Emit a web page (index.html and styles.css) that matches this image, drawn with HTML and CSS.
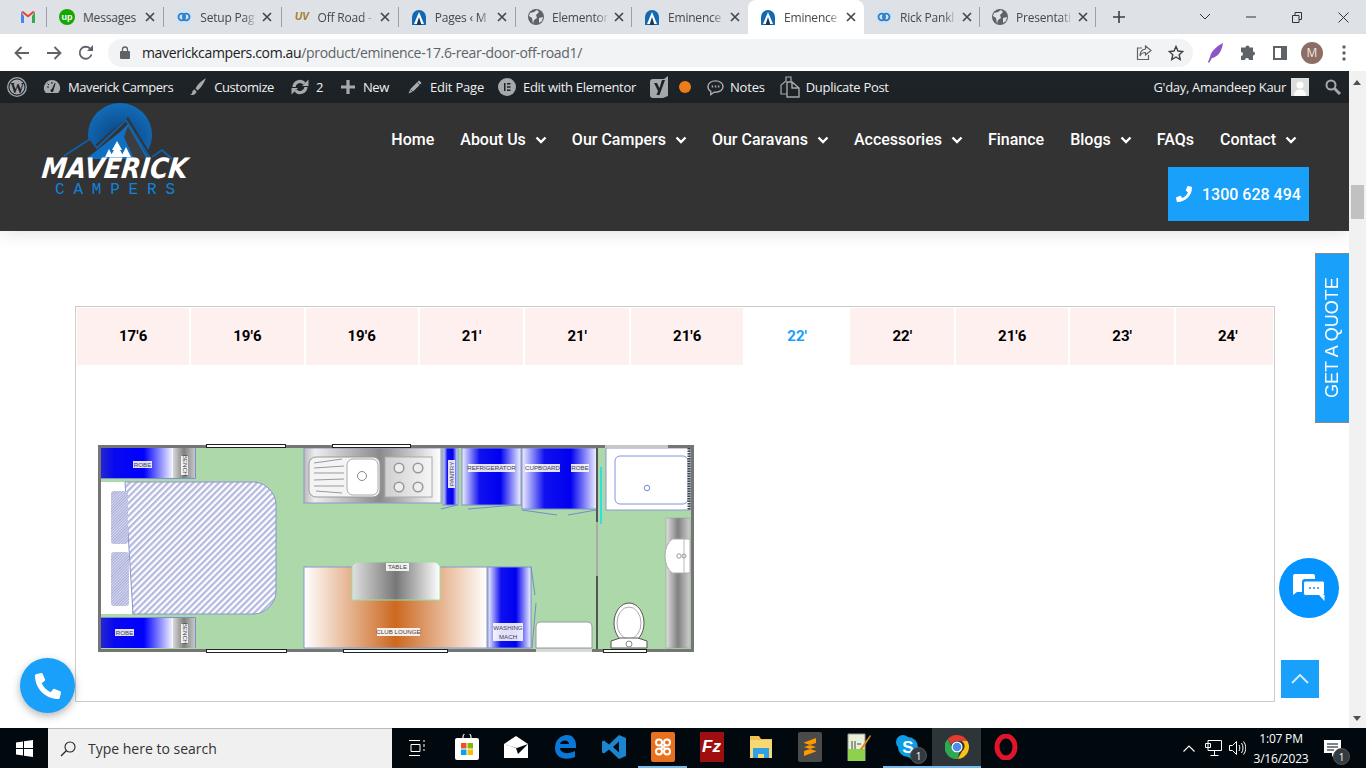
FILE: index.html
```html
<!DOCTYPE html>
<html>
<head>
  <title>Eminence 17'6 Rear Door Off Road</title>
  <link rel="stylesheet" href="styles.css">
</head>
<body>
  <svg class="defs" width="0" height="0">
    <symbol id="mav" viewBox="0 0 16 16">
      <path d="M1 16V8a7 7 0 0 1 14 0v8z" fill="#1168b3"/>
      <path d="M8 3 13 15H3z" fill="#fff"/>
      <path d="M8 8 10.500 16H5.500z" fill="#14395e"/>
    </symbol>
    <symbol id="globe" viewBox="0 0 16 16">
      <circle cx="8" cy="8" r="8" fill="#5f6368"/>
      <path d="M2 4 6 3 9 1 11 3 8 6 9 9 6 11 5 15 4 9 1 7ZM11 9 15 8 14 12 11 14Z" fill="#dee1e6"/>
    </symbol>
    <symbol id="ring" viewBox="0 0 16 16">
      <circle cx="8" cy="8" r="8" fill="#cfe3f5"/>
      <circle cx="5.800" cy="8" r="3.300" fill="none" stroke="#2d7fc6" stroke-width="1.800"/>
      <circle cx="10.200" cy="8" r="3.300" fill="none" stroke="#2d7fc6" stroke-width="1.800"/>
    </symbol>
    <symbol id="close" viewBox="0 0 10 10">
      <path d="M1 1 9 9M9 1 1 9" stroke="#45484c" stroke-width="1.7" fill="none"/>
    </symbol>
    <symbol id="chev" viewBox="0 0 12 8">
      <path d="M1.500 1.500 6 6l4.500-4.500" stroke="#fff" stroke-width="2.400" fill="none"/>
    </symbol>
    <symbol id="phone" viewBox="0 0 512 512">
      <path d="M493.400 24.600l-104-24c-11.300-2.600-22.900 3.300-27.500 13.900l-48 112c-4.200 9.800-1.400 21.300 6.900 28l60.600 49.600c-36 76.700-98.900 140.500-177.200 177.200l-49.600-60.600c-6.800-8.300-18.200-11.100-28-6.900l-112 48C3.900 366.500-2 378.100.6 389.400l24 104C27.100 504.200 36.700 512 48 512c256.100 0 464-207.500 464-464 0-11.200-7.700-20.900-18.600-23.400z" fill="#fff"/>
    </symbol>
  </svg>

  <!-- browser tabs -->
  <div class="tabstrip">
    <div class="tab tab-pinned">
      <svg width="16" height="16" viewBox="0 0 16 16"><path d="M1 3v11h3V7z" fill="#4285f4"/><path d="M15 3v11h-3V7z" fill="#34a853"/><path d="M1 3 8 8.500 15 3 13 2 8 6 3 2Z" fill="#ea4335"/></svg>
    </div>
    <div class="tab">
      <svg width="16" height="16" viewBox="0 0 16 16"><circle cx="8" cy="8" r="8" fill="#14a800"/><text x="8" y="11" class="fav-up">up</text></svg>
      <span class="tab-title">Messages</span>
      <svg class="tab-x" width="10" height="10"><use href="#close"/></svg>
    </div>
    <div class="tab">
      <svg width="16" height="16"><use href="#ring"/></svg>
      <span class="tab-title">Setup Pag</span>
      <svg class="tab-x" width="10" height="10"><use href="#close"/></svg>
    </div>
    <div class="tab">
      <svg width="16" height="16" viewBox="0 0 16 16"><text x="8" y="11" class="fav-uv">UV</text></svg>
      <span class="tab-title">Off Road -</span>
      <svg class="tab-x" width="10" height="10"><use href="#close"/></svg>
    </div>
    <div class="tab">
      <svg width="16" height="16"><use href="#mav"/></svg>
      <span class="tab-title">Pages ‹ M</span>
      <svg class="tab-x" width="10" height="10"><use href="#close"/></svg>
    </div>
    <div class="tab">
      <svg width="16" height="16"><use href="#globe"/></svg>
      <span class="tab-title">Elementor</span>
      <svg class="tab-x" width="10" height="10"><use href="#close"/></svg>
    </div>
    <div class="tab tab-before-active">
      <svg width="16" height="16"><use href="#mav"/></svg>
      <span class="tab-title">Eminence</span>
      <svg class="tab-x" width="10" height="10"><use href="#close"/></svg>
    </div>
    <div class="tab tab-active">
      <svg width="16" height="16"><use href="#mav"/></svg>
      <span class="tab-title">Eminence</span>
      <svg class="tab-x" width="10" height="10"><use href="#close"/></svg>
    </div>
    <div class="tab">
      <svg width="16" height="16"><use href="#ring"/></svg>
      <span class="tab-title">Rick Pankl</span>
      <svg class="tab-x" width="10" height="10"><use href="#close"/></svg>
    </div>
    <div class="tab">
      <svg width="16" height="16"><use href="#globe"/></svg>
      <span class="tab-title">Presentati</span>
      <svg class="tab-x" width="10" height="10"><use href="#close"/></svg>
    </div>
    <svg class="new-tab" width="14" height="14" viewBox="0 0 14 14"><path d="M7 1v12M1 7h12" stroke="#3c4043" stroke-width="1.600"/></svg>
    <div class="win-controls">
      <span class="win-btn"><svg width="12" height="8" viewBox="0 0 12 8"><path d="M1 1l5 5 5-5" stroke="#333" fill="none"/></svg></span>
      <span class="win-btn"><svg width="10" height="2" viewBox="0 0 10 2"><path d="M0 1h10" stroke="#333"/></svg></span>
      <span class="win-btn"><svg width="10" height="11" viewBox="0 0 10 11"><path d="M.5 3.500h6.500v7H.5zM3 3.500V.5h6.500v7H7" stroke="#333" fill="none"/></svg></span>
      <span class="win-btn"><svg width="11" height="11" viewBox="0 0 11 11"><path d="M.5.5l10 10M10.500.5l-10 10" stroke="#333" fill="none"/></svg></span>
    </div>
  </div>

  <!-- address bar -->
  <div class="toolbar">
    <span class="tool-btn"><svg width="16" height="14" viewBox="0 0 16 14"><path d="M15 7H2M7.500 1 1.500 7l6 6" stroke="#5f6368" stroke-width="1.800" fill="none"/></svg></span>
    <span class="tool-btn"><svg width="16" height="14" viewBox="0 0 16 14"><path d="M1 7h13M8.500 1l6 6-6 6" stroke="#5f6368" stroke-width="1.800" fill="none"/></svg></span>
    <span class="tool-btn"><svg width="16" height="16" viewBox="0 0 16 16"><path d="M13.500 9.500A6 6 0 1 1 12 3.500" stroke="#5f6368" stroke-width="1.800" fill="none"/><path d="M9 6h6V0z" fill="#5f6368"/></svg></span>
    <div class="omnibox">
      <svg class="lock" width="10" height="13" viewBox="0 0 10 13"><path d="M2.500 6V3.500a2.500 2.500 0 0 1 5 0V6" stroke="#5f6368" stroke-width="1.300" fill="none"/><rect y="5" width="10" height="8" rx="1" fill="#5f6368"/></svg>
      <span class="url"><span class="url-host">maverickcampers.com.au</span>/product/eminence-17.6-rear-door-off-road1/</span>
      <svg class="omni-icon" width="16" height="16" viewBox="0 0 16 16"><path d="M6 3H1.500v11.500h11V10" stroke="#5f6368" stroke-width="1.200" fill="none"/><path d="M9.500 1l5.500 4.500L9.500 10V7.500C7 7.500 5 8.500 4 11c0-4 2-6.500 5.500-7z" stroke="#5f6368" stroke-width="1.200" fill="#f1f3f4"/></svg>
      <svg class="omni-icon" width="16" height="16" viewBox="0 0 16 16"><path d="M8 1.500l2 4.500 4.800.5-3.600 3.200 1 4.800L8 12l-4.200 2.500 1-4.800L1.200 6.500 6 6z" stroke="#3c4043" stroke-width="1.400" fill="none"/></svg>
    </div>
    <span class="tool-btn"><svg width="16" height="20" viewBox="0 0 16 20"><path d="M15 0C9 3 3 8 2 14L0 19l1 1 3-5C10 14 14 8 15 0z" fill="#8a55c9"/></svg></span>
    <span class="tool-btn"><svg width="16" height="16" viewBox="0 0 16 16"><path d="M5.500 2.500a2 2 0 0 1 4 0H13v4a2 2 0 0 1 0 4V15H9a2 2 0 0 0-4 0H1v-4a2 2 0 0 0 0-4V2.500z" fill="#5f6368"/></svg></span>
    <span class="tool-btn"><svg width="14" height="14" viewBox="0 0 14 14"><rect x="1" y="1" width="12" height="12" fill="none" stroke="#5f6368" stroke-width="2"/><rect x="8" y="1" width="5" height="12" fill="#5f6368"/></svg></span>
    <span class="tool-btn"><span class="profile">M</span></span>
    <span class="tool-btn"><svg width="4" height="16" viewBox="0 0 4 16"><circle cx="2" cy="2" r="1.700" fill="#5f6368"/><circle cx="2" cy="8" r="1.700" fill="#5f6368"/><circle cx="2" cy="14" r="1.700" fill="#5f6368"/></svg></span>
  </div>

  <div class="viewport">
    <div class="page">
      <!-- wp admin bar -->
      <div class="adminbar">
        <div class="ab-left">
          <span class="ab-item"><svg width="20" height="20" viewBox="0 0 20 20"><circle cx="10" cy="10" r="9.300" fill="none" stroke="#a7aaad" stroke-width="1.300"/><circle cx="10" cy="10" r="7.500" fill="#a7aaad"/><text x="10" y="15.500" class="ab-w">W</text></svg></span>
          <span class="ab-item"><svg width="18" height="18" viewBox="0 0 18 18"><path d="M9 2a8 8 0 0 0-7 12l1 1h12l1-1A8 8 0 0 0 9 2z" fill="#a7aaad"/><path d="M9 12 12 5.500 10 12z" stroke="#1d2327" fill="#1d2327"/><circle cx="9" cy="12.500" r="1.500" fill="#1d2327"/><path d="M4 9h2M9 4v2M4.500 5.500 6 7" stroke="#1d2327"/></svg>Maverick Campers</span>
          <span class="ab-item"><svg width="17" height="18" viewBox="0 0 17 18"><path d="M16 0C11 3 7 7 5.500 10.500l2 2C11 10 14 5 16 0z" fill="#a7aaad"/><path d="M4.500 11.500c-2 .5-2 2-2.500 3.500-.3 1-1 1.500-2 2 3 .5 6-.500 6.500-3.500z" fill="#a7aaad"/></svg>Customize</span>
          <span class="ab-item"><svg width="18" height="18" viewBox="0 0 18 18"><path d="M3 9A6 6 0 0 1 13.500 5.500" stroke="#a7aaad" stroke-width="3.200" fill="none"/><path d="M15 9A6 6 0 0 1 4.500 12.500" stroke="#a7aaad" stroke-width="3.200" fill="none"/><path d="M11 8h6.500V1.500zM7 10H.5v6.500z" fill="#a7aaad"/></svg>2</span>
          <span class="ab-item"><svg width="16" height="16" viewBox="0 0 16 16"><path d="M8 1v14M1 8h14" stroke="#a7aaad" stroke-width="3.200"/></svg>New</span>
          <span class="ab-item ab-editpage"><svg width="16" height="16" viewBox="0 0 16 16"><path d="M12 1l3 3L6 13l-5 2 2-5zM10.500 3.500l2.500 2.500M3.500 10.500 6 13" fill="#a7aaad" stroke="#1d2327" stroke-width=".7"/></svg>Edit Page</span>
          <span class="ab-item ab-pull ab-elementor"><svg width="18" height="18" viewBox="0 0 18 18"><circle cx="9" cy="9" r="9" fill="#a7aaad"/><path d="M6 5h1.500v8H6zM9 5h3.500v1.500H9zM9 8.300h3.500v1.500H9zM9 11.500h3.500V13H9z" fill="#1d2327"/></svg>Edit with Elementor</span>
          <span class="ab-item ab-pull"><svg width="18" height="22" viewBox="0 0 18 22"><path d="M3 3h11l4-3v20l-5 2H3a3 3 0 0 1-3-3V6a3 3 0 0 1 3-3z" fill="#a7aaad"/><path d="M4 7h3l2.500 5L12 4h3l-5.500 15H6.500l1.500-4z" fill="#1d2327"/></svg></span>
          <span class="ab-dot"></span>
          <span class="ab-item ab-tight ab-notes"><svg width="17" height="17" viewBox="0 0 18 17"><path d="M9 1.500c4.500 0 8 2.500 8 6s-3.500 6-8 6H7.500L4 16v-3.500C2 11.500 1 9.500 1 7.500c0-3.500 3.500-6 8-6z" fill="none" stroke="#a7aaad" stroke-width="1.500"/><path d="M5 7.500h1.600M8.300 7.500h1.600M11.500 7.500h1.600" stroke="#a7aaad" stroke-width="2"/></svg>Notes</span>
          <span class="ab-item ab-tight ab-dup"><svg width="20" height="22" viewBox="0 0 20 22"><path d="M6 5 1 9v9h6M6 5V1h5v5" fill="none" stroke="#a7aaad" stroke-width="1.200"/><path d="M12 6H7v15h12V12zM12 6v6h7" fill="none" stroke="#a7aaad" stroke-width="1.400"/></svg>Duplicate Post</span>
        </div>
        <div class="ab-right">
          <span class="howdy">G'day, Amandeep Kaur</span>
          <svg width="18" height="18" viewBox="0 0 18 18"><rect width="18" height="18" fill="#ddd"/><circle cx="9" cy="7" r="3.500" fill="#fff"/><path d="M3 18c0-5 3-6.500 6-6.500s6 1.500 6 6.500z" fill="#fff"/></svg>
          <svg class="ab-search" width="16" height="16" viewBox="0 0 16 16"><circle cx="6" cy="6" r="4.500" fill="none" stroke="#a7aaad" stroke-width="2"/><path d="M9.500 9.500 15 15" stroke="#a7aaad" stroke-width="3"/></svg>
        </div>
      </div>

      <!-- site header -->
      <header class="site-header">
        <svg class="logo" width="156" height="100" viewBox="0 0 156 100">
          <defs>
            <radialGradient id="sun" cx=".5" cy=".6" r=".7"><stop offset="0" stop-color="#0a3f78"/><stop offset="1" stop-color="#1374c4"/></radialGradient>
          </defs>
          <circle cx="80" cy="32" r="32" fill="url(#sun)"/>
          <path d="M22 55 50 35 55 42 88 14 113 55 122 47 134 58V70H22Z" fill="#333"/>
          <path d="M24 53 50 36 57 45 86 17 110 55" fill="none" stroke="#0e5ea8" stroke-width="2"/>
          <path d="M112 54 122 47 132 56" fill="none" stroke="#0e5ea8" stroke-width="2"/>
          <path d="M46 56 80 29 88 21 109 56Z" fill="#0f70c2"/>
          <path d="M88 23 107 56H94L84 34Z" fill="#3b3d40"/>
          <path d="M77 38 82 47H80L84 54H70L74 47H72ZM69 46 73 54H65ZM86 44 91 54H81Z" fill="#fff"/>
          <text x="9" y="75" class="logo-name" transform="skewX(-6)" textLength="146" lengthAdjust="spacingAndGlyphs">MAVERICK</text>
          <text x="15" y="91" class="logo-sub" textLength="120">CAMPERS</text>
        </svg>
        <div class="header-right">
          <nav class="menu">
            <a>Home</a>
            <a>About Us<svg width="12" height="8"><use href="#chev"/></svg></a>
            <a>Our Campers<svg width="12" height="8"><use href="#chev"/></svg></a>
            <a>Our Caravans<svg width="12" height="8"><use href="#chev"/></svg></a>
            <a>Accessories<svg width="12" height="8"><use href="#chev"/></svg></a>
            <a>Finance</a>
            <a>Blogs<svg width="12" height="8"><use href="#chev"/></svg></a>
            <a>FAQs</a>
            <a>Contact<svg width="12" height="8"><use href="#chev"/></svg></a>
          </nav>
          <a class="call-btn"><svg width="16" height="16"><use href="#phone"/></svg>1300 628 494</a>
        </div>
      </header>

      <main class="content">
        <div class="panel">
          <div class="length-tabs">
            <span class="length-tab">17'6</span>
            <span class="length-tab">19'6</span>
            <span class="length-tab">19'6</span>
            <span class="length-tab">21'</span>
            <span class="length-tab">21'</span>
            <span class="length-tab">21'6</span>
            <span class="length-tab active">22'</span>
            <span class="length-tab">22'</span>
            <span class="length-tab">21'6</span>
            <span class="length-tab">23'</span>
            <span class="length-tab">24'</span>
          </div>

          <!-- floor plan, viewBox is in screen px so it is easy to check against the shot -->
          <svg class="plan" width="596" height="209" viewBox="98 444 596 209">
            <defs>
              <linearGradient id="blue"><stop offset="0" stop-color="#f0f0ff"/><stop offset=".3" stop-color="#1010f0"/><stop offset=".65" stop-color="#0000f0"/><stop offset="1" stop-color="#f4f4ff"/></linearGradient>
              <linearGradient id="blueEdge"><stop offset="0" stop-color="#2828d0"/><stop offset=".2" stop-color="#0808f0"/><stop offset=".6" stop-color="#0000ff"/><stop offset="1" stop-color="#f8f8ff"/></linearGradient>
              <linearGradient id="steel"><stop offset="0" stop-color="#e0e0e0"/><stop offset=".5" stop-color="#808080"/><stop offset="1" stop-color="#d0d0d0"/></linearGradient>
              <linearGradient id="bench"><stop offset="0" stop-color="#d8d8d8"/><stop offset=".5" stop-color="#808080"/><stop offset="1" stop-color="#c8c8c8"/></linearGradient>
              <linearGradient id="kitchen"><stop offset="0" stop-color="#bbb"/><stop offset=".08" stop-color="#eee"/><stop offset=".55" stop-color="#8a8a8a"/><stop offset="1" stop-color="#fff"/></linearGradient>
              <linearGradient id="hob"><stop offset="0" stop-color="#cfcfcf"/><stop offset="1" stop-color="#f6f6f6"/></linearGradient>
              <linearGradient id="lounge"><stop offset="0" stop-color="#fff"/><stop offset=".5" stop-color="#cc6820"/><stop offset="1" stop-color="#fff"/></linearGradient>
              <linearGradient id="tableTop"><stop offset="0" stop-color="#e0e0e0"/><stop offset=".5" stop-color="#777"/><stop offset="1" stop-color="#fff"/></linearGradient>
              <pattern id="hatch" width="4.500" height="4.500" patternUnits="userSpaceOnUse" patternTransform="rotate(-45)"><rect width="4.500" height="4.500" fill="#fff"/><rect width="4.500" height="2.300" fill="#b4b9df"/></pattern>
              <pattern id="hatchFine" width="2" height="2" patternUnits="userSpaceOnUse" patternTransform="rotate(-45)"><rect width="2" height="2" fill="#d8daee"/><rect width="2" height="1" fill="#a8acd8"/></pattern>
            </defs>

            <rect x="98" y="445" width="596" height="207" fill="#add8a9"/>

            <!-- bed end -->
            <rect x="100" y="482" width="32" height="132" fill="#fff"/>
            <path d="M125 482H254C266 482 276 494 276 504V592C276 602 266 614 254 614H133Z" fill="url(#hatch)" stroke="#8b96d0"/>
            <rect x="111" y="491" width="17" height="53" rx="3" fill="url(#hatchFine)"/>
            <rect x="111" y="552" width="18" height="54" rx="3" fill="url(#hatchFine)"/>

            <rect x="100" y="448" width="73" height="30" fill="url(#blueEdge)"/>
            <rect x="173" y="448" width="22" height="30" fill="url(#bench)"/>
            <rect x="100" y="618" width="73" height="30" fill="url(#blueEdge)"/>
            <rect x="173" y="618" width="22" height="30" fill="url(#bench)"/>
            <path d="M100 478.500H195.500V448M100 617.500H195.500V648" fill="none" stroke="#7d90c8"/>

            <!-- kitchen -->
            <rect x="304" y="448" width="137" height="55" fill="url(#kitchen)" stroke="#8b96d0"/>
            <rect x="309" y="457" width="71" height="40" rx="7" fill="#f4f4f4" stroke="#999"/>
            <rect x="347" y="459" width="31" height="36" rx="6" fill="#fff" stroke="#aaa"/>
            <circle cx="362" cy="476" r="4.500" fill="none" stroke="#888"/>
            <path d="M314 463 342 459M314 468 344 466M314 473 344 473M314 480 344 479M314 486 344 486M316 491 342 493" stroke="#999" fill="none"/>
            <rect x="385" y="457" width="47" height="40" fill="url(#hob)" stroke="#aaa"/>
            <circle cx="399" cy="468" r="4.800" fill="#eee" stroke="#999" stroke-width="1.500"/>
            <circle cx="418" cy="468" r="4.800" fill="#eee" stroke="#999" stroke-width="1.500"/>
            <circle cx="399" cy="487" r="4.800" fill="#eee" stroke="#999" stroke-width="1.500"/>
            <circle cx="418" cy="487" r="4.800" fill="#eee" stroke="#999" stroke-width="1.500"/>

            <rect x="443" y="448" width="15" height="57" fill="url(#blue)" stroke="#7d90c8"/>
            <rect x="462" y="448" width="59" height="57" fill="url(#blue)" stroke="#7d90c8"/>
            <rect x="522" y="448" width="75" height="61" fill="url(#blue)" stroke="#7d90c8"/>
            <path d="M441 509 457 505M468 509 516 505M522 510 557 515M568 515 596 510" stroke="#6f8fc8" fill="none"/>

            <!-- lounge -->
            <rect x="304" y="567" width="183" height="81" fill="url(#lounge)" stroke="#8b96d0"/>
            <path d="M356 562H436L440 566V600H352V566Z" fill="url(#tableTop)" stroke="#9adf9a"/>
            <rect x="488" y="567" width="43" height="81" fill="url(#blue)" stroke="#7d90c8"/>
            <path d="M531 567 535 595M536 603 532 648" stroke="#6f8fc8" fill="none"/>
            <path d="M536 648V627Q536 622 541 622H587Q592 622 592 627V648Z" fill="#fff" stroke="#999"/>

            <!-- partition -->
            <path d="M597 448V522" stroke="#555" stroke-width="2"/>
            <path d="M597 522V576" stroke="#aaa" stroke-width="2"/>
            <path d="M597 576V650" stroke="#555" stroke-width="2"/>
            <path d="M601 467V524" stroke="#2ae0e0" stroke-width="2"/>

            <!-- ensuite -->
            <rect x="606" y="448" width="84" height="62" fill="#fff" stroke="#8b96d0"/>
            <rect x="615" y="456" width="73" height="48" rx="5" fill="#fff" stroke="#7f96d8"/>
            <circle cx="647" cy="488" r="2.800" fill="none" stroke="#6f8fd0"/>
            <path d="M689 448V510" stroke="#444" stroke-width="3" stroke-dasharray="1.500 1"/>
            <rect x="666" y="518" width="24" height="130" fill="url(#steel)" stroke="#999" stroke-width=".5"/>
            <path d="M690 539H672Q665 545 665 556Q665 567 672 573H690Z" fill="#fff" stroke="#aaa"/>
            <path d="M684 539V573" stroke="#bbb"/>
            <circle cx="679" cy="556" r="2.200" fill="none" stroke="#999"/>
            <circle cx="684" cy="556" r="2" fill="none" stroke="#999"/>
            <ellipse cx="629" cy="623" rx="15" ry="20" fill="#fff" stroke="#555"/>
            <ellipse cx="629" cy="623" rx="12" ry="16" fill="#fff" stroke="#aaa"/>
            <path d="M611 648V641L620 638H638L647 641V648Z" fill="#fff" stroke="#555"/>
            <circle cx="629" cy="644" r="3" fill="none" stroke="#888"/>

            <!-- walls and windows -->
            <rect x="99.500" y="446.500" width="593" height="204" fill="none" stroke="#757575" stroke-width="3"/>
            <path d="M605 446.500H668" stroke="#c8c8c8" stroke-width="3"/>
            <path d="M536 650.500H592" stroke="#d8d8d8" stroke-width="3"/>
            <rect x="206.500" y="444.500" width="79" height="3" fill="#fff" stroke="#222"/>
            <rect x="332.500" y="444.500" width="78" height="3" fill="#fff" stroke="#222"/>
            <rect x="206.500" y="649.500" width="80" height="3" fill="#fff" stroke="#222"/>
            <rect x="343.500" y="649.500" width="104" height="3" fill="#fff" stroke="#222"/>
            <rect x="603.500" y="649.500" width="43" height="3" fill="#fff" stroke="#222"/>

            <!-- labels -->
            <g class="plan-labels">
              <rect x="133" y="461" width="19" height="7"/><text x="142.500" y="466.800">ROBE</text>
              <rect x="115" y="629" width="19" height="7"/><text x="124.500" y="634.800">ROBE</text>
              <rect x="181" y="456" width="7" height="19"/><text transform="translate(182.500 465.500) rotate(90)">BENCH</text>
              <rect x="181" y="624" width="7" height="19"/><text transform="translate(182.500 633.500) rotate(90)">BENCH</text>
              <rect x="448" y="460" width="7" height="28"/><text transform="translate(453.800 474) rotate(-90)">PANTRY</text>
              <rect x="468" y="464" width="47" height="8"/><text x="491.500" y="470.200">REFRIGERATOR</text>
              <rect x="525" y="464" width="35" height="8"/><text x="542.500" y="470.200">CUPBOARD</text>
              <rect x="571" y="464" width="18" height="8"/><text x="580" y="470.200">ROBE</text>
              <rect x="386" y="563" width="23" height="8"/><text x="397.500" y="569.200">TABLE</text>
              <rect x="377" y="628" width="43" height="8"/><text x="398.500" y="634.200">CLUB LOUNGE</text>
              <rect x="493" y="623" width="30" height="18"/><text x="508" y="630">WASHING</text><text x="508" y="638.500">MACH</text>
            </g>
          </svg>
        </div>
      </main>
    </div>
    <div class="scrollbar">
      <span class="arrow-up"></span>
      <span class="thumb"></span>
      <span class="arrow-down"></span>
    </div>
  </div>

  <!-- taskbar -->
  <footer class="taskbar">
    <span class="start"><svg width="17" height="17" viewBox="0 0 17 17"><path d="M0 2.400 7 1.400V8H0zM8 1.300 17 0V8H8zM0 9h7v6.600l-7-1zM8 9h9v8l-9-1.300z" fill="#fff"/></svg></span>
    <div class="search-box">
      <svg width="16" height="16" viewBox="0 0 16 16"><circle cx="10" cy="6" r="5" fill="none" stroke="#222" stroke-width="1.100"/><path d="M6.500 9.500 1 15" stroke="#222" stroke-width="1.300"/></svg>
      <span>Type here to search</span>
    </div>
    <span class="task-view"><svg width="16" height="20" viewBox="0 0 16 20"><path d="M0 2.500h11M0 17.500h11M2 6.500h9v7H2zM15 2v2M15 6v3M15 11v2" stroke="#fff" fill="none"/></svg></span>
    <span class="task"><svg width="24" height="26" viewBox="0 0 24 26"><path d="M8 5V3a4 4 0 0 1 8 0v2" stroke="#ddd" fill="none" stroke-width="1.300"/><rect y="4" width="24" height="22" rx="2" fill="#fff"/><path d="M6 9h5.500v5.500H6z" fill="#f25022"/><path d="M12.500 9H18v5.500h-5.500z" fill="#7fba00"/><path d="M6 15.500h5.500V21H6z" fill="#00a4ef"/><path d="M12.500 15.500H18V21h-5.500z" fill="#ffb900"/></svg></span>
    <span class="task"><svg width="24" height="24" viewBox="0 0 24 24"><path d="M0 9 12 1l12 8v14H0z" fill="#fff"/><path d="M0 9l13 4 11-4-10 10-2-6z" fill="#02090e"/></svg></span>
    <span class="task"><svg width="22" height="26" viewBox="0 0 22 26"><path d="M22 14H6c.5 5 7 7 15 3v6c-10 4-20 1-20-9C1 6 7 1 13 1c6 0 9 5 9 10zM6 10h9c0-4-7-5-9 0z" fill="#0b78d7"/></svg></span>
    <span class="task"><svg width="24" height="24" viewBox="0 0 24 24"><path d="M17 0 24 3v18l-7 3L7 14.500 2 18.500 0 17.500V6.500L2 5.500l5 4zM17 6.500l-6 5.500 6 5.500z" fill="#1a86d0"/></svg></span>
    <span class="task task-open"><svg width="24" height="30" viewBox="0 0 24 30"><rect width="24" height="30" rx="2" fill="#e8701e"/><g fill="none" stroke="#fff" stroke-width="2"><circle cx="8" cy="10.500" r="3"/><circle cx="16" cy="10.500" r="3"/><circle cx="8" cy="19.500" r="3"/><circle cx="16" cy="19.500" r="3"/><path d="M9 12.500l6 5M15 12.500l-6 5"/></g></svg></span>
    <span class="task"><span class="fz">Fz</span></span>
    <span class="task"><svg width="22" height="24" viewBox="0 0 22 24"><path d="M0 1h9l2 3h11v5H0z" fill="#f3c14f"/><rect y="5" width="22" height="18" fill="#f8d775"/><path d="M3 23V13h16v10h-5v-4H8v4z" fill="#2f9fe6"/></svg></span>
    <span class="task"><span class="sublime"><svg width="12" height="18" viewBox="0 0 12 18"><path d="M12 0v5L0 9V4.500zM0 9l12 4v-4L0 5zM0 13l12-4v4.500L0 18z" fill="#ff9800"/></svg></span></span>
    <span class="task"><svg width="24" height="28" viewBox="0 0 24 28"><path d="M1 1h17v27H1z" fill="#e8f0d8" stroke="#999"/><path d="M1 16h17v12H1z" fill="#8ed14b"/><path d="M5 8v8M8 8v8M10 11h4" stroke="#444"/><path d="M23 2 13 16l2 1L24 3z" fill="#d98a1a"/></svg></span>
    <span class="task task-open"><svg width="24" height="24" viewBox="0 0 24 24"><circle cx="7" cy="7" r="7" fill="#0e9ce6"/><circle cx="17" cy="17" r="7" fill="#0e9ce6"/><circle cx="12" cy="12" r="10" fill="#0e9ce6"/><text x="12" y="18" class="skype-s">S</text></svg><span class="badge">1</span></span>
    <span class="task task-open task-active"><svg width="24" height="24" viewBox="0 0 24 24"><path d="M12 0a12 12 0 0 1 10.400 6H12a6 6 0 0 0-5.600 3.800L2.500 4.200A12 12 0 0 1 12 0z" fill="#e33b2e"/><path d="M22.400 6a12 12 0 0 1-9.700 18l4.500-8a6 6 0 0 0-.700-10z" fill="#fbc116"/><path d="M2.500 4.200 7 12a5 5 0 0 0 7.500 5l-1.800 7A12 12 0 0 1 2.500 4.200z" fill="#2da94f"/><circle cx="12" cy="12" r="5.500" fill="#fff"/><circle cx="12" cy="12" r="4.300" fill="#4a8df0"/></svg></span>
    <span class="task"><svg width="24" height="26" viewBox="0 0 24 26"><ellipse cx="12" cy="13" rx="9" ry="11" fill="none" stroke="#e0142a" stroke-width="5"/></svg></span>
    <div class="tray">
      <span class="tray-item"><svg width="12" height="7" viewBox="0 0 12 7"><path d="M.5 6.500 6 1l5.500 5.500" stroke="#fff" fill="none" stroke-width="1.100"/></svg></span>
      <span class="tray-item"><svg width="17" height="16" viewBox="0 0 17 16"><path d="M3 .5h13.500v10H3zM.5 3.500v4h5v-4zM9.500 10.500v5M5.500 15.500h8" stroke="#fff" fill="#02090e" stroke-width="1"/></svg></span>
      <span class="tray-item"><svg width="17" height="16" viewBox="0 0 17 16"><path d="M.5 5.500h3l4-4v13l-4-4h-3zM10 5c1 1.500 1 4.500 0 6M12.500 3c2 3 2 7 0 10M14.500 1.500c3 4 3 9 0 13" stroke="#fff" fill="none"/></svg></span>
      <span class="clock"><span>1:07 PM</span><span>3/16/2023</span></span>
      <span class="notify"><svg width="17" height="17" viewBox="0 0 17 17"><path d="M0 0h17v13h-6l-3 4v-4H0z" fill="#fff"/><path d="M3 4h11M3 7h11M3 10h7" stroke="#02090e"/></svg><span class="badge">1</span></span>
    </div>
  </footer>

  <!-- floating site widgets -->
  <a class="quote-tab">GET A QUOTE</a>
  <a class="float-call"><svg width="26" height="26"><use href="#phone"/></svg></a>
  <a class="float-chat">
    <svg width="32" height="28" viewBox="0 0 32 28"><path d="M2 0h18a2 2 0 0 1 2 2v3H12a3 3 0 0 0-3 3v10H4l-4 3V2a2 2 0 0 1 2-2z" fill="#fff"/><rect x="10.500" y="7" width="21" height="14.500" rx="2" fill="#fff" stroke="#0593ff"/><path d="M26 21h5.500v6z" fill="#fff"/><circle cx="17" cy="14" r="1" fill="#0593ff"/><circle cx="21" cy="14" r="1" fill="#0593ff"/><circle cx="25" cy="14" r="1" fill="#0593ff"/></svg>
  </a>
  <a class="to-top"><svg width="18" height="10" viewBox="0 0 18 10"><path d="M1 9l8-8 8 8" stroke="#cfe9fd" stroke-width="2" fill="none"/></svg></a>
</body>
</html>
```

FILE: styles.css
```css
* { box-sizing: border-box; }
html, body { margin: 0; height: 768px; overflow: hidden; }
body { display: flex; flex-direction: column; width: 1366px; background: #fff; font-family: "Open Sans", sans-serif; }
.defs { position: absolute; }
svg { display: block; flex: none; }

/* browser chrome */
.tabstrip { display: flex; align-items: center; height: 34px; padding-left: 12px; background: #dee1e6; flex: none; }
.tab { position: relative; display: flex; align-items: center; width: 116px; height: 34px; padding-left: 12px; font-size: 12px; color: #45484c; }
.tab:nth-child(-n+5) { width: 117.250px; }
.tab::after { content: ""; position: absolute; right: 0; top: 7px; width: 1px; height: 20px; background: #9aa0a6; }
.tab.tab-pinned { width: 35px; padding-left: 8px; }
.tab-before-active::after, .tab-active::after { display: none; }
.tab-active { background: #fff; border-radius: 8px 8px 0 0; }
.tab-title { width: 57px; margin-right: 4px; margin-left: 8px; white-space: nowrap; overflow: hidden; letter-spacing: -0.2px; -webkit-mask-image: linear-gradient(to right, #000 44px, transparent 57px); mask-image: linear-gradient(to right, #000 44px, transparent 57px); }
.tab-x { margin-left: 1px; }
.tab:nth-child(2) .tab-title { -webkit-mask-image: none; mask-image: none; }
.fav-up { font: bold 9px "Liberation Sans", sans-serif; fill: #fff; text-anchor: middle; }
.fav-uv { font: italic bold 10px "Liberation Sans", sans-serif; fill: #a07a24; text-anchor: middle; }
.new-tab { margin-left: 16px; }
.win-controls { display: flex; margin-left: auto; }
.win-btn { display: flex; align-items: center; justify-content: center; width: 46px; height: 30px; }

.toolbar { display: flex; align-items: center; height: 37px; padding: 0 6px; background: #fff; flex: none; }
.tool-btn { display: flex; align-items: center; justify-content: center; width: 32px; height: 28px; flex: none; }
.omnibox { display: flex; align-items: center; flex: 1; height: 28px; margin: 0 7px 0 6px; padding: 0 9px 0 12px; border-radius: 14px; background: #f1f3f4; }
.lock { margin-right: 12px; }
.url { flex: 1; font-size: 14px; letter-spacing: -0.35px; color: #5f6368; white-space: nowrap; }
.url-host { color: #202124; }
.omni-icon { margin-left: 16px; }
.profile { display: flex; align-items: center; justify-content: center; width: 22px; height: 22px; border-radius: 50%; background: #8d6e63; color: #efe6e2; font-size: 12px; }

/* page area */
.viewport { display: flex; flex: 1; min-height: 0; }
.page { flex: 1; min-width: 0; overflow: hidden; }
.scrollbar { position: relative; width: 17px; background: #f1f1f1; flex: none; }
.thumb { position: absolute; left: 2px; top: 114px; width: 13px; height: 34px; background: #c1c1c1; }
.arrow-up, .arrow-down { position: absolute; left: 4px; border-left: 4.500px solid transparent; border-right: 4.500px solid transparent; }
.arrow-up { top: 9px; border-bottom: 5px solid #505050; }
.arrow-down { bottom: 7px; border-top: 5px solid #505050; }

.adminbar { display: flex; justify-content: space-between; align-items: center; height: 32px; padding: 0 8px 0 7px; background: #1d2327; color: #f0f0f1; font-size: 13px; letter-spacing: -0.42px; }
.ab-left { display: flex; align-items: center; gap: 17px; }
.ab-left > :nth-child(2) { margin-left: -1px; }
.ab-item { display: flex; align-items: center; gap: 7px; white-space: nowrap; }
.ab-pull { margin-left: -3px; }
.ab-tight { gap: 6px; }
.ab-editpage { margin-left: 1px; letter-spacing: -0.2px; }
.ab-elementor { letter-spacing: -0.3px; }
.ab-notes { letter-spacing: -0.2px; }
.ab-dup { margin-left: -2px; letter-spacing: -0.3px; }
.ab-dot { width: 12px; height: 12px; margin: 0 -1px 0 -6px; border-radius: 50%; background: #ee7c1b; }
.ab-right { display: flex; align-items: center; letter-spacing: -0.3px; }
.howdy { margin-right: 5px; }
.ab-search { margin-left: 16px; }
.ab-w { font: bold 14px "Liberation Serif", serif; fill: #1d2327; text-anchor: middle; }

.site-header { display: flex; justify-content: space-between; height: 128px; padding-left: 40px; background: #333; box-shadow: 0 2px 18px rgba(0,0,0,.12); position: relative; }
.logo-name { font: italic bold 28px "DejaVu Sans", sans-serif; fill: #fff; }
.logo-sub { font: 16px "Liberation Mono", monospace; fill: #0f82dc; }
.header-right { display: flex; flex-direction: column; align-items: flex-end; padding-right: 40px; }
.menu { display: flex; gap: 26px; height: 24px; margin: 25px 13px 15px 0; font: 500 16px/24px Roboto, sans-serif; color: #fff; }
.menu a { display: flex; align-items: center; white-space: nowrap; }
.menu svg { margin-left: 9px; margin-right: -1px; }
.call-btn { display: flex; align-items: center; gap: 10px; width: 141px; height: 54px; padding-left: 8px; background: #18a0fb; color: #fff; font: 500 16px Roboto, sans-serif; white-space: nowrap; }

.content { height: 497px; padding: 75px 0 0 75px; background: #fff; }
.panel { width: 1200px; height: 396px; padding: 1px; border: 1px solid #ccc; }
.length-tabs { display: flex; height: 57px; overflow: hidden; }
.length-tab { display: flex; align-items: center; padding: 0 42px 2px; margin-right: 2px; background: #fff0f0; color: #000; font: bold 15px Roboto, sans-serif; white-space: nowrap; flex: none; }
.length-tab.active { padding-right: 42.500px; margin-right: 1px; background: #fff; color: #18a0fb; }
.plan { margin: 79px 0 0 21px; }
.plan-labels rect { fill: #fff; opacity: .88; }
.plan-labels text { font: 6.200px "Liberation Sans", sans-serif; fill: #444; text-anchor: middle; }

/* taskbar */
.taskbar { display: flex; align-items: stretch; height: 40px; background: #02090e; flex: none; }
.start { display: flex; align-items: center; justify-content: center; width: 48px; }
.search-box { display: flex; align-items: center; gap: 12px; width: 344px; padding-left: 12px; background: #f0f0f0; border-top: 1px solid #bbb; color: #333; font-size: 14px; }
.task-view { display: flex; align-items: center; justify-content: center; width: 50px; }
.task { position: relative; display: flex; align-items: center; justify-content: center; width: 49px; border-bottom: 2px solid transparent; }
.task-open { border-bottom-color: #76b9ed; }
.task-active { background: #2d3539; }
.fz { display: flex; align-items: center; justify-content: center; width: 24px; height: 30px; background: #a00f0f; color: #fff; font: italic bold 17px "Liberation Sans", sans-serif; }
.sublime { display: flex; align-items: center; justify-content: center; width: 24px; height: 30px; border-radius: 2px; background: #4a4a4a; }
.skype-s { font: bold 17px "Liberation Sans", sans-serif; fill: #fff; text-anchor: middle; }
.badge { position: absolute; right: 5px; bottom: 2px; display: flex; align-items: center; justify-content: center; width: 17px; height: 17px; border-radius: 50%; background: #333b40; border: 1px solid #555; color: #fff; font-size: 10px; }
.tray { display: flex; align-items: center; margin-left: auto; padding-right: 15px; color: #fff; }
.tray-item { display: flex; align-items: center; justify-content: center; width: 24px; }
.clock { display: flex; flex-direction: column; align-items: center; gap: 4px; width: 64px; padding-top: 2px; font-size: 12px; line-height: 16px; letter-spacing: -0.2px; white-space: nowrap; }
.notify { position: relative; display: flex; align-items: center; justify-content: center; width: 38px; height: 40px; }
.notify .badge { right: 1px; bottom: 3px; }

/* floating widgets */
.quote-tab { position: fixed; right: 17px; top: 253px; display: flex; align-items: center; justify-content: center; width: 34px; height: 170px; writing-mode: vertical-rl; transform: rotate(180deg); background: #18a0fb; border: 1px solid #888; border-left: 0; color: #fff; font: 18px "Liberation Sans", sans-serif; }
.float-call { position: fixed; left: 20px; top: 658px; display: flex; align-items: center; justify-content: center; width: 55px; height: 55px; border-radius: 50%; background: #18a0fb; box-shadow: 0 3px 8px rgba(0,0,0,.3); }
.float-call svg { transform: scaleX(-1); }
.float-chat { position: fixed; left: 1279px; top: 558px; display: flex; align-items: center; justify-content: center; width: 60px; height: 60px; border-radius: 50%; background: #0593ff; }
.to-top { position: fixed; left: 1281px; top: 660px; display: flex; align-items: center; justify-content: center; width: 38px; height: 38px; background: #18a0fb; }
```
